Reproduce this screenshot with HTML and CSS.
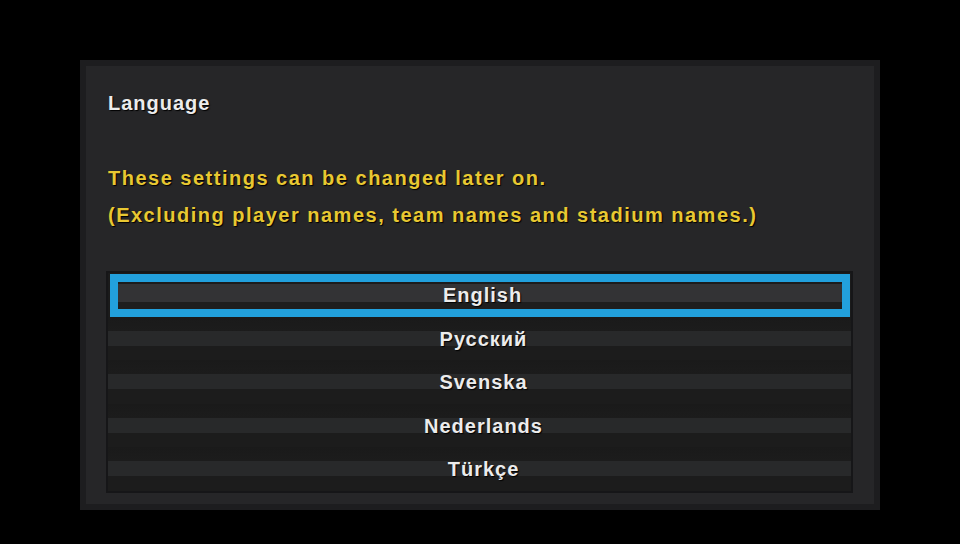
FILE: index.html
```html
<!DOCTYPE html>
<html>
<head>
<meta charset="utf-8">
<link rel="stylesheet" href="styles.css">
</head>
<body>
<div class="panel">
  <div class="title">Language</div>
  <div class="notice">
    <div>These settings can be changed later on.</div>
    <div>(Excluding player names, team names and stadium names.)</div>
  </div>
  <div class="list">
    <div class="row selected"><span>English</span></div>
    <div class="row"><span>Русский</span></div>
    <div class="row"><span>Svenska</span></div>
    <div class="row"><span>Nederlands</span></div>
    <div class="row"><span>Türkçe</span></div>
  </div>
</div>
</body>
</html>
```
FILE: styles.css
```css
html, body {
  margin: 0;
  padding: 0;
  background: #000;
  width: 960px;
  height: 544px;
  overflow: hidden;
}
body {
  font-family: "Liberation Sans", Arial, sans-serif;
  font-weight: bold;
}
.panel {
  box-sizing: border-box;
  margin: 60px 0 0 80px;
  width: 800px;
  height: 450px;
  border: 6px solid #1d1d1f;
  background: #262628;
  padding: 25px 21px 0 20px;
}
.title {
  color: #ececec;
  font-size: 20px;
  line-height: 24px;
  letter-spacing: 1px;
  margin-left: 2px;
  text-shadow: 1px 1px 1px #000;
}
.notice {
  margin: 45px 0 0 2px;
  color: #e8c832;
  font-size: 20px;
  line-height: 37px;
  letter-spacing: 1.5px;
  text-shadow: 1px 1px 1px #000;
}
.list {
  margin-top: 37px;
  border: 2px solid #161618;
  background: #1b1b1b;
}
.row {
  box-sizing: border-box;
  height: 43.5px;
  display: flex;
  align-items: center;
  justify-content: center;
  padding-left: 8px;
  padding-top: 2px;
  background: linear-gradient(#1a1a1a 0, #1c1c1c 14px, #28292a 14px, #28292a 29px, #1c1c1c 29px);
  color: #ececec;
  font-size: 20px;
  letter-spacing: 1px;
  text-shadow: 1px 1px 1px #000;
}
.row.selected {
  height: 42.5px;
  margin: 1px 1px 0 2px;
  border: 8px solid #22a0dc;
  padding-left: 5px;
  padding-top: 1px;
  background: linear-gradient(#1c1c1c 0, #1c1c1c 2px, #333335 2px, #333335 20px, #1e1e1e 20px);
}
```
